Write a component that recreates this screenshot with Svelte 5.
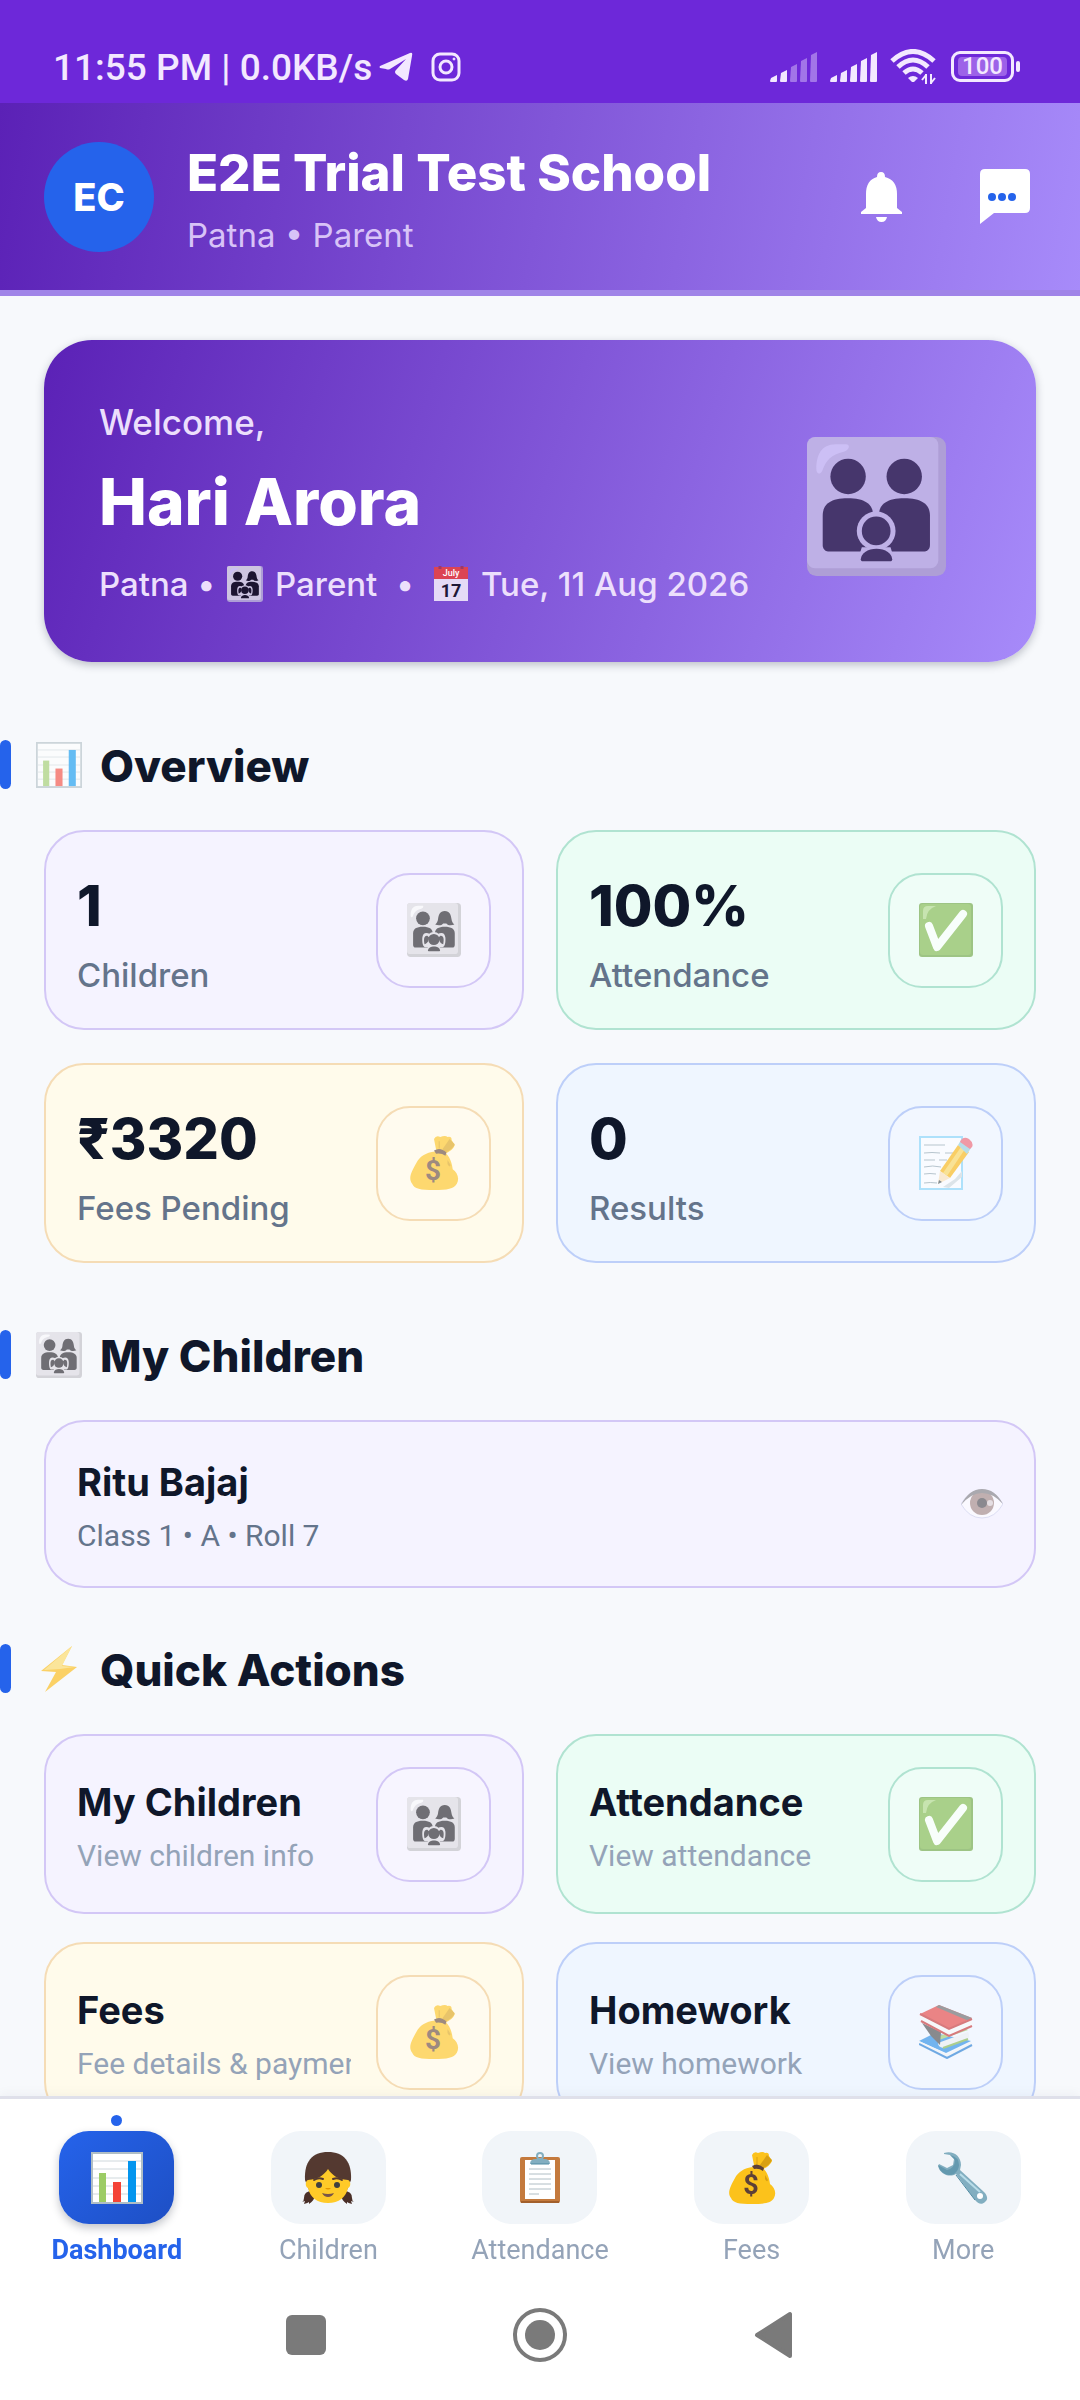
<script>
  const stats = [
    { value: '1', label: 'Children', icon: 'family', tone: 'violet' },
    { value: '100%', label: 'Attendance', icon: 'check', tone: 'green' },
    { value: '₹3320', label: 'Fees Pending', icon: 'bag', tone: 'amber' },
    { value: '0', label: 'Results', icon: 'memo', tone: 'blue' },
  ];
  const actions = [
    { title: 'My Children', note: 'View children info', icon: 'family', tone: 'violet' },
    { title: 'Attendance', note: 'View attendance', icon: 'check', tone: 'green' },
    { title: 'Fees', note: 'Fee details & payments', icon: 'bag', tone: 'amber' },
    { title: 'Homework', note: 'View homework', icon: 'books', tone: 'blue' },
  ];
  const tabs = [
    { label: 'Dashboard', icon: 'chart' },
    { label: 'Children', icon: 'girl' },
    { label: 'Attendance', icon: 'clipboard' },
    { label: 'Fees', icon: 'bag' },
    { label: 'More', icon: 'wrench' },
  ];
  let active = $state('Dashboard');
  const bars = [7, 12, 18, 24, 30];
</script>

{#snippet emoji(name)}
  {#if name === 'family' || name === 'parents'}
    <svg class="emoji family" class:large={name === 'parents'} viewBox="0 0 416 416" aria-hidden="true">
      <rect class="edge" width="416" height="416" rx="28" />
      <rect class="tile" width="393" height="393" rx="24" />
      <path class="shine" d="M28 96c0-40 14-74 58-74h30c16 0 10 18-6 22-38 10-52 24-64 56-6 14-18 12-18-4z" />
      <circle class="ink" cx="123" cy="118" r="53" />
      {#if name === 'family'}
        <path class="ink" d="M291 62c38 0 48 30 52 64 2 18 10 30 22 40-24 10-50 8-62-8h-24c-12 16-38 18-62 8 12-10 20-22 22-40 4-34 14-64 52-64z" />
      {:else}
        <circle class="ink" cx="291" cy="118" r="53" />
      {/if}
      <path class="ink" d="M47 235c0-36 26-52 75-52s76 16 76 52v108H67c-12 0-20-8-20-20z" />
      <path class="ink" d="M215 235c0-36 27-52 76-52s77 16 77 52v88c0 12-8 20-20 20H215z" />
      <circle class="tile" cx="207" cy="281" r="58" />
      {#if name === 'family'}
        <path class="tile" d="M118 268c4-44 34-44 60-28h58c26-16 56-16 60 28 2 38-4 72-24 72H142c-20 0-26-34-24-72z" />
        <path class="ink" d="M135 318c-8-40-4-70 22-66l14 14c-6 20-6 44-36 52zM279 318c8-40 4-70-22-66l-14 14c6 20 6 44 36 52z" />
      {/if}
      <circle class="ink" cx="207" cy="281" r="43" />
      <path class="tile" d="M150 374l14-44h86l14 44z" />
      <path class="ink" d="M161 366c4-42 90-42 94 0 0 4-2 6-6 6h-82c-4 0-6-2-6-6z" />
    </svg>
  {:else if name === 'check'}
    <svg class="emoji" viewBox="0 0 54 54" aria-hidden="true">
      <rect width="54" height="54" rx="3" fill="#689f38" />
      <rect x="1" y="1" width="51" height="51" rx="3" fill="#7cb342" />
      <path d="M4 16V8q0-5 5-5h8q-9 3-10 13z" fill="#aed581" />
      <path d="M10 23l8 21L44 11" fill="none" stroke="#fff" stroke-width="8" stroke-linecap="round" stroke-linejoin="round" />
    </svg>
  {:else if name === 'bag'}
    <svg class="emoji" viewBox="0 0 52 52" aria-hidden="true">
      <path d="M28 13L26 3q2-4 6-2 5-2 7 0 4-1 4 3l3 5q-2 5-9 8z" fill="#fcc21b" />
      <path d="M34 13l7-10 5 5q-2 5-9 8z" fill="#d9a012" />
      <path d="M31 12V5" stroke="#d9a012" />
      <path d="M27 15c-9 1-15 5-18 11-5 9-8 15-4 20 2 5 8 6 21 6s19-1 22-6c3-6 0-11-4-14-1-9-5-15-9-17z" fill="#fcc21b" />
      <path d="M39 23l3 5q-1 3-3-1z" fill="#d9a012" />
      <path d="M26 14q6-4 12 2l-1 3q-4-3-9-2z" fill="#5d4037" />
      <text x="25" y="42" text-anchor="middle" class="dollar">$</text>
    </svg>
  {:else if name === 'memo'}
    <svg class="emoji" viewBox="0 0 54 54" aria-hidden="true">
      <rect x="1" y="1" width="42" height="52" fill="#fff" stroke="#81d4fa" stroke-width="2" />
      <path d="M5 9h21M5 17q8-1 16 0M26 17h8M5 24h11M20 24h8M5 31q9-2 17 0M5 38q6-1 12 0M5 47q6-1 13 0" fill="none" stroke="#90a4ae" stroke-width="1" />
      <path d="M24 51l12-8 7-8v6l-13 11z" fill="#cfd8dc" />
      <path d="M21 35L39 9l11 7-19 26z" fill="#ffb300" />
      <path d="M24 37L42 11l4 2-18 27z" fill="#ffd54f" />
      <path d="M21 35l10 7-12 6z" fill="#ffe0b2" />
      <path d="M20 44l3 2-4 2z" fill="#37474f" />
      <path d="M39 9l3-5 10 8-4 6z" fill="#90cfdc" />
      <path d="M42 4q3-4 8-1 5 4 3 8l-2 2-10-7z" fill="#ef5b6a" />
    </svg>
  {:else if name === 'books'}
    <svg class="emoji" viewBox="0 0 54 54" aria-hidden="true">
      <path d="M0 36l16-8 36 8-25 12z" fill="#1e88e5" />
      <path d="M0 36l28 13 24-12q3 3 0 6L29 53 1 40z" fill="#f5f5f5" />
      <path d="M0 39l28 14 25-13" fill="none" stroke="#1976d2" stroke-width="2" />
      <path d="M20 35l29-10-3-2-26 8z" fill="#9ccc65" />
      <path d="M19 38l30-11q2 4 0 7L24 43q-5-1-5-5z" fill="#eceff1" />
      <path d="M24 43l25-9" stroke="#7cb342" stroke-width="2" />
      <path d="M3 18l19 9-1 13-9-9z" fill="#424242" />
      <path d="M20 0L1 9l29 15 23-11z" fill="#e53935" />
      <path d="M20 0l33 13-3 3L17 2z" fill="#616161" />
      <path d="M1 9l29 15 22-9q3 3 0 6L30 31 2 16q-2-4-1-7z" fill="#fafafa" />
      <path d="M1 9l29 15 23-10M2 16l28 15 23-10" fill="none" stroke="#c62828" stroke-width="2" />
    </svg>
  {:else if name === 'chart'}
    <svg class="emoji" viewBox="0 0 52 52" aria-hidden="true">
      <rect x="1" y="1" width="50" height="50" fill="#fff" stroke="#b0bec5" stroke-width="2" />
      <path d="M2 9h48M2 17h48M2 26h48M2 34h48M2 42h48" stroke="#cfd8dc" stroke-width="1" />
      <path d="M8 21h7v29H8z" fill="#9ccc65" />
      <path d="M22 30h8v20h-8z" fill="#f44336" />
      <path d="M37 9h8v41h-8z" fill="#0395ee" />
      <path d="M0 51h52" stroke="#b0bec5" stroke-width="2" />
    </svg>
  {:else if name === 'girl'}
    <svg class="emoji" viewBox="0 0 52 52" aria-hidden="true">
      <path d="M10 39q-8 0-8 7 0 3-2 4l3-1-1 3q4-1 5-2v2q6-4 6-10zM42 39q8 0 8 7 0 3 2 4l-3-1 1 3q-4-1-5-2v2q-6-4-6-10z" fill="#4a2f28" />
      <path d="M26 0C10 0 2 10 3 28l4 10h38l4-10C50 10 42 0 26 0z" fill="#543930" />
      <path d="M26 17c4 6 9 10 20 11 3 1 3 7 0 8-2 9-9 15-20 15S8 45 6 36c-3-1-3-7 0-8 11-1 16-5 20-11z" fill="#ffca28" />
      <circle cx="17" cy="33" r="3" fill="#404040" />
      <circle cx="35" cy="33" r="3" fill="#404040" />
      <path d="M12 28q4-3 9-1M31 27q5-2 9 1" fill="none" stroke="#543930" stroke-width="2" stroke-linecap="round" />
      <path d="M23 36h6q-3 3-6 0z" fill="#e59600" />
      <path d="M20 41q6 2 12 0-2 4-6 4t-6-4z" fill="#795548" />
    </svg>
  {:else if name === 'clipboard'}
    <svg class="emoji" viewBox="0 0 52 52" aria-hidden="true">
      <rect x="6" y="5" width="40" height="46" rx="2" fill="#c47a3d" />
      <path d="M7 50h38" stroke="#a35f2b" stroke-width="2" />
      <path d="M11 8h30v39H11z" fill="#fff" />
      <path d="M15 17h22M15 22h22M15 27h22M15 32h22M15 37h22M15 42h10" stroke="#b0bec5" />
      <circle cx="26" cy="4" r="3" fill="none" stroke="#82aec0" stroke-width="2" />
      <path d="M16 12q0-5 6-5h8q6 0 6 5z" fill="#82aec0" />
      <path d="M17 12h18" stroke="#4f8ba3" />
    </svg>
  {:else if name === 'wrench'}
    <svg class="emoji" viewBox="0 0 52 52" aria-hidden="true">
      <path d="M7 1c9-3 17 3 17 12l-1 5 24 22c4 4 4 8 1 10-3 3-7 2-10-2L19 22c-7 4-16 0-18-8l1-2 8 4 6-3 1-6-4-4-6-1z" fill="#82aec0" />
      <path d="M1 13l9 5q8-2 8-10l-5-5q9 2 9 10 0 5-5 9-8 3-14-4z" fill="#4f8ba3" opacity=".6" />
      <path d="M23 22l20 18" stroke="#b9dde9" stroke-width="2" />
      <path d="M19 23l19 25" stroke="#4f8ba3" stroke-width="1" />
      <circle cx="43" cy="44" r="3" fill="#fff" />
    </svg>
  {:else if name === 'bolt'}
    <svg class="emoji" viewBox="-5 0 46 46" aria-hidden="true">
      <path d="M31 0L0 25l15 1L4 46l32-25-15-2z" fill="#feb804" />
      <path d="M31 0L3 24l16-1 14-2-12-1z" fill="#ffd95a" />
    </svg>
  {:else if name === 'eye'}
    <svg class="emoji" viewBox="0 0 42 30" aria-hidden="true">
      <path d="M0 15Q8 1 21 1t21 14Q34 29 21 29T0 15z" fill="#fff" stroke="#c5cae9" stroke-width="1" />
      <circle cx="21" cy="14" r="12" fill="#8d6e63" />
      <circle cx="21" cy="14" r="5" fill="#212121" />
      <circle cx="29" cy="14" r="3" fill="#d7ccc8" />
      <path d="M0 16Q8 0 21 0t21 15Q32 4 21 4T0 16z" fill="#616161" />
    </svg>
  {:else if name === 'calendar'}
    <svg class="emoji" viewBox="0 0 34 36" aria-hidden="true">
      <path d="M0 12h34v23H0z" fill="#e5daf6" />
      <path d="M0 1h34v12H0z" fill="#dc4453" />
      <path d="M6 0v3M28 0v3" stroke="#9c3a68" stroke-width="3" />
      <text x="17" y="10" text-anchor="middle" class="month">July</text>
      <text x="17" y="31" text-anchor="middle" class="day">17</text>
    </svg>
  {/if}
{/snippet}

{#snippet signal(strength)}
  <svg class="signal" viewBox="0 0 48 31" aria-hidden="true">
    {#each bars as h, i}
      <path d="M{i * 10 + 1} {34 - h}l6-3V30q0 1-1 1h-5q-1 0-1-1z" opacity={i < strength ? 1 : 0.4} />
    {/each}
  </svg>
{/snippet}

{#snippet heading(icon, text)}
  <h2 class="heading">
    <span class="bar"></span>
    {@render emoji(icon)}
    <span class="text">{text}</span>
  </h2>
{/snippet}

<div class="app">
  <div class="status">
    <span class="clock">11:55 PM | 0.0KB/s</span>
    <svg class="telegram" viewBox="0 0 34 30" aria-hidden="true">
      <path d="M1 14L31 1q3-1 2 3l-4 23q-1 3-4 1l-8-6q-2-2 0-4L27 7 11 17q-2 1-4 0l-6-1q-1-1 0-2z" fill="currentColor" />
    </svg>
    <svg class="insta" viewBox="0 0 30 30" fill="none" stroke="currentColor" stroke-width="3" aria-hidden="true">
      <rect x="2" y="2" width="26" height="26" rx="7" />
      <circle cx="15" cy="15" r="6" />
      <circle cx="23" cy="7" r="1" stroke-width="1" fill="currentColor" />
    </svg>
    <div class="system">
      {@render signal(2)}
      {@render signal(5)}
      <svg class="wifi" viewBox="0 0 46 35" fill="none" stroke="currentColor" stroke-width="5" aria-hidden="true">
        <path d="M2 12Q23-7 44 12M8 18Q23 4 38 18M14 24q9-8 18 0" />
        <path d="M18 29q5-4 10 0l-4 4h-2z" fill="currentColor" stroke="none" />
        <path d="M36 25v10M41 35V25M36 26l-4 5M41 34l4-5" stroke-width="2" />
      </svg>
      <div class="battery"><span>100</span></div>
    </div>
  </div>

  <header>
    <div class="avatar">EC</div>
    <div class="school">
      <h1>E2E Trial Test School</h1>
      <p>Patna • Parent</p>
    </div>
    <button class="tool" aria-label="Notifications">
      <svg class="bell" viewBox="0 0 41 50" aria-hidden="true">
        <path d="M20 0q4 0 4 5 12 3 12 17v14l5 4v2H0v-2l5-4V22Q5 8 16 5q0-5 4-5z" fill="#fff" />
        <path d="M15 45h11q-1 5-5.500 5T15 45z" fill="#fff" />
      </svg>
    </button>
    <button class="tool" aria-label="Messages">
      <svg class="chat" viewBox="0 0 50 55" aria-hidden="true">
        <path d="M5 0h40q5 0 5 5v34q0 5-5 5H14L0 55V5q0-5 5-5z" fill="#fff" />
        <g fill="#2563eb"><circle cx="12" cy="28" r="4" /><circle cx="22" cy="28" r="4" /><circle cx="32" cy="28" r="4" /></g>
      </svg>
    </button>
  </header>

  <main>
    <section class="hero">
      <div class="greeting">
        <p class="welcome">Welcome,</p>
        <p class="name">Hari Arora</p>
        <p class="meta">
          <span>Patna •</span>
          {@render emoji('family')}
          <span>Parent</span>
          <span class="dot">•</span>
          {@render emoji('calendar')}
          <span>Tue, 11 Aug 2026</span>
        </p>
      </div>
      {@render emoji('parents')}
    </section>

    <section>
      {@render heading('chart', 'Overview')}
      <div class="grid stats">
        {#each stats as s}
          <button class="card {s.tone}">
            <span class="copy">
              <span class="value">{s.value}</span>
              <span class="label">{s.label}</span>
            </span>
            <span class="box">{@render emoji(s.icon)}</span>
          </button>
        {/each}
      </div>
    </section>

    <section>
      {@render heading('family', 'My Children')}
      <div class="grid single">
        <button class="card child violet">
          <span class="copy">
            <span class="title">Ritu Bajaj</span>
            <span class="note strong">Class 1 • A • Roll 7</span>
          </span>
          {@render emoji('eye')}
        </button>
      </div>
    </section>

    <section>
      {@render heading('bolt', 'Quick Actions')}
      <div class="grid actions">
        {#each actions as a}
          <button class="card {a.tone}">
            <span class="copy">
              <span class="title">{a.title}</span>
              <span class="note">{a.note}</span>
            </span>
            <span class="box">{@render emoji(a.icon)}</span>
          </button>
        {/each}
      </div>
    </section>
  </main>

  <nav class="tabs">
    {#each tabs as t}
      <button class="tab" class:active={active === t.label} onclick={() => (active = t.label)}>
        <span class="pill">{@render emoji(t.icon)}</span>
        {t.label}
      </button>
    {/each}
  </nav>

  <div class="system-nav">
    <button aria-label="Recent apps">
      <svg viewBox="0 0 54 54" aria-hidden="true"><rect x="7" y="7" width="40" height="40" rx="6" fill="#7a7a7a" /></svg>
    </button>
    <button aria-label="Home">
      <svg viewBox="0 0 54 54" aria-hidden="true">
        <circle cx="27" cy="27" r="25" fill="none" stroke="#7a7a7a" stroke-width="4" />
        <circle cx="27" cy="27" r="15" fill="#7a7a7a" />
      </svg>
    </button>
    <button aria-label="Back">
      <svg viewBox="0 0 54 54" aria-hidden="true">
        <path d="M10 27L43 6v42z" fill="#7a7a7a" stroke="#7a7a7a" stroke-width="4" stroke-linejoin="round" />
      </svg>
    </button>
  </div>
</div>

<style>
  :global(body) { margin: 0; background: #f7f9fc; }
  :global(#app) { height: 100vh; }
  .app {
    display: flex;
    flex-direction: column;
    height: 100%;
    color: #0f172a;
    font-family: Inter, Roboto, sans-serif;
  }
  h1, h2, p { margin: 0; }
  button {
    font: inherit;
    color: inherit;
    border: 0;
    padding: 0;
    background: none;
    text-align: left;
    cursor: pointer;
  }
  svg { display: block; flex: none; }

  .status {
    display: flex;
    align-items: center;
    box-sizing: border-box;
    height: 103px;
    padding: 30px 60px 0 53px;
    background: #6d28d9;
    color: #f3e8ff;
    font-family: Roboto, sans-serif;
  }
  .clock { padding-top: 3px; font-size: 37px; line-height: 40px; font-weight: 500; }
  .telegram { width: 34px; height: 30px; margin-left: 7px; }
  .insta { width: 30px; height: 30px; margin-left: 18px; }
  .system { display: flex; align-items: center; gap: 12px; margin-left: auto; }
  .signal { width: 48px; height: 31px; fill: currentColor; }
  .wifi { width: 46px; height: 35px; }
  .battery {
    position: relative;
    box-sizing: border-box;
    width: 63px;
    height: 31px;
    margin: 0 6px 0 3px;
    padding: 3px 4px;
    border: 3px solid currentColor;
    border-radius: 9px;
  }
  .battery::after {
    content: '';
    position: absolute;
    right: -9px;
    top: 7px;
    width: 4px;
    height: 11px;
    border-radius: 2px;
    background: currentColor;
  }
  .battery span {
    display: block;
    border-radius: 4px;
    background: #9d62e8;
    font-size: 24px;
    line-height: 19px;
    text-align: center;
    font-weight: 500;
  }

  header {
    display: flex;
    align-items: center;
    box-sizing: border-box;
    height: 193px;
    padding: 0 50px 0 44px;
    border-bottom: 6px solid #a084e8;
    background: linear-gradient(100deg, #5b21b6, #a78bfa) border-box;
  }
  .avatar {
    width: 110px;
    height: 110px;
    border-radius: 50%;
    background: #2563eb;
    color: #fff;
    font-size: 38px;
    line-height: 110px;
    font-weight: 800;
    text-align: center;
  }
  .school { flex: 1; margin-left: 33px; padding-top: 4px; }
  h1 { color: #fff; font-size: 51px; line-height: 64px; font-weight: 800; }
  .school p { color: #d8c3f7; font-size: 33px; line-height: 44px; margin-top: 8px; }
  .tool { margin-left: 78px; }
  .bell { width: 41px; height: 50px; }
  .chat { width: 50px; height: 55px; }

  main {
    flex: 1;
    min-height: 0;
    overflow: hidden auto;
    scrollbar-width: none;
    padding-top: 44px;
    background: #f7f9fc;
  }
  .hero {
    display: flex;
    align-items: center;
    justify-content: space-between;
    box-sizing: border-box;
    height: 322px;
    margin: 0 44px 78px;
    padding: 10px 90px 0 55px;
    border-radius: 48px;
    background: linear-gradient(108deg, #5b21b6, #a78bfa);
    box-shadow: 0 3px 8px rgb(15 23 42 / 25%);
    color: #ecdffc;
  }
  .greeting { padding-bottom: 6px; }
  .welcome { font-size: 35px; line-height: 44px; font-weight: 500; }
  .name { margin: 18px 0 20px; color: #fff; font-size: 64px; line-height: 80px; font-weight: 800; }
  .meta {
    display: flex;
    align-items: center;
    gap: 12px;
    font-size: 33px;
    line-height: 44px;
    font-weight: 500;
    white-space: nowrap;
  }
  .meta .emoji { width: 36px; height: 36px; opacity: 1; }
  .meta .dot { margin: 0 7px; }
  .month { font: 500 9px Roboto, sans-serif; fill: #fff; }
  .day { font: 700 18px Roboto, sans-serif; fill: #1f1738; }
  .dollar { font: 700 27px Roboto, sans-serif; fill: #5d4037; }

  .emoji { width: 54px; height: 54px; opacity: 0.6; }
  .family { opacity: 1; }
  .edge { fill: #d3d3d8; }
  .tile { fill: #e5e4ea; }
  .shine { fill: #f8f8fb; }
  .ink { fill: #6f6e74; }
  .hero .edge { fill: #ae9ed6; }
  .hero .tile { fill: #beb0e6; }
  .hero .shine { fill: #ccbff5; }
  .hero .ink { fill: #46366c; }
  .hero .meta .tile { fill: #cdc4e0; }
  .hero .meta .ink { fill: #1c1430; }
  .large { width: 139px; height: 139px; }

  .heading {
    display: flex;
    align-items: center;
    height: 49px;
    margin-bottom: 41px;
    font-size: 44px;
    line-height: 49px;
    font-weight: 800;
  }
  .heading .bar { width: 11px; height: 49px; margin-right: 25px; border-radius: 6px; background: #2563eb; }
  .heading .emoji { width: 46px; height: 46px; margin-right: 18px; }
  .heading .text { padding-top: 4px; }

  .grid { display: grid; grid-template-columns: 1fr 1fr; gap: 33px 32px; padding: 0 44px; }
  .stats { margin-bottom: 67px; }
  .single { grid-template-columns: 1fr; margin-bottom: 56px; }
  .actions { row-gap: 28px; }
  .card {
    display: flex;
    align-items: center;
    gap: 25px;
    box-sizing: border-box;
    min-width: 0;
    height: 200px;
    padding: 0 31px;
    border: 2px solid var(--line);
    border-radius: 40px;
    background: var(--fill);
  }
  .actions .card { height: 180px; }
  .child { height: 168px; }
  .child .emoji { width: 42px; height: 30px; opacity: 0.5; }
  .violet { --line: #d3c7f6; --fill: #f5f3ff; }
  .green { --line: #b0e3d1; --fill: #ebfdf5; }
  .amber { --line: #f5dcb5; --fill: #fffbeb; }
  .blue { --line: #bdcff9; --fill: #eff6ff; }
  .copy {
    display: flex;
    flex-direction: column;
    flex: 1;
    min-width: 0;
    padding-top: 6px;
    overflow: hidden;
    white-space: nowrap;
  }
  .value { font-size: 56px; line-height: 72px; font-weight: 800; }
  .label { margin-top: 11px; color: #64748b; font-size: 33px; line-height: 44px; font-weight: 500; }
  .title { font-size: 38px; line-height: 50px; font-weight: 700; }
  .note { margin-top: 7px; color: #94a3b8; font: 400 30px/44px Roboto, sans-serif; }
  .strong { color: #64748b; }
  .box {
    display: grid;
    place-items: center;
    box-sizing: border-box;
    flex: none;
    width: 115px;
    height: 115px;
    border: 2px solid var(--line);
    border-radius: 34px;
    background: rgb(255 255 255 / 20%);
  }

  .tabs {
    display: flex;
    box-sizing: border-box;
    height: 184px;
    padding: 32px 11px 0;
    border-top: 3px solid #dfe0ea;
    background: #fff;
    box-shadow: 0 -3px 10px rgb(15 23 42 / 4%);
  }
  .tab {
    position: relative;
    display: flex;
    flex: 1;
    flex-direction: column;
    align-items: center;
    gap: 10px;
    color: #94a3b8;
    font: 400 27px/32px Roboto, sans-serif;
  }
  .tab .emoji { width: 52px; height: 52px; opacity: 1; }
  .pill {
    display: grid;
    place-items: center;
    width: 115px;
    height: 93px;
    border-radius: 30px;
    background: #f1f5f9;
  }
  .active { color: #2563eb; font-weight: 700; }
  .active .pill {
    background: linear-gradient(135deg, #2563eb, #1e4fc4);
    box-shadow: 0 4px 8px rgb(15 23 42 / 25%);
  }
  .active::before {
    content: '';
    position: absolute;
    top: -16px;
    width: 11px;
    height: 11px;
    border-radius: 50%;
    background: #2563eb;
  }

  .system-nav {
    display: flex;
    justify-content: center;
    align-items: flex-start;
    gap: 180px;
    box-sizing: border-box;
    height: 120px;
    padding-top: 28px;
    background: #fff;
  }
  .system-nav svg { width: 54px; height: 54px; }
</style>
